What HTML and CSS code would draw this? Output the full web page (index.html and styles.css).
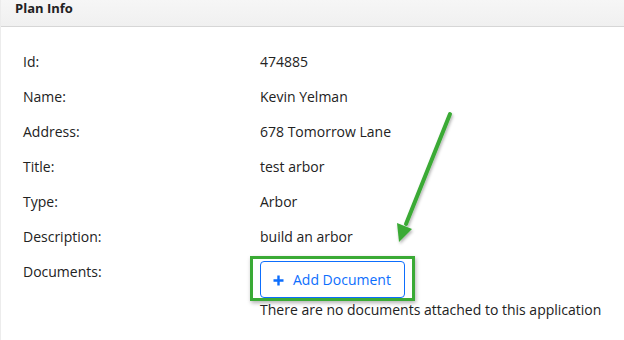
FILE: index.html
```html
<!doctype html>
<html lang="en-us">
  <head>
    <meta charset="utf-8">
    <title>Plan Info</title>
    <link rel="stylesheet" href="styles.css">
  </head>
  <body>
    <div class="card">
      <div class="card-header">Plan Info</div>
      <div class="card-body">
        <div class="row"><div class="label">Id:</div><div class="value">474885</div></div>
        <div class="row"><div class="label">Name:</div><div class="value">Kevin Yelman</div></div>
        <div class="row"><div class="label">Address:</div><div class="value">678 Tomorrow Lane</div></div>
        <div class="row"><div class="label">Title:</div><div class="value">test arbor</div></div>
        <div class="row"><div class="label">Type:</div><div class="value">Arbor</div></div>
        <div class="row"><div class="label">Description:</div><div class="value">build an arbor</div></div>
        <div class="row docs">
          <div class="label">Documents:</div>
          <div class="value">
            <div class="btn-wrap">
              <button class="btn-add" type="button">
                <svg class="plus" width="11" height="11" viewBox="0 0 11 11"><path d="M5.5 0.5v10M0.5 5.5h10" stroke="currentColor" stroke-width="2.4" fill="none"/></svg>
                Add Document
              </button>
              <div class="highlight"></div>
            </div>
            <div class="empty">There are no documents attached to this application</div>
          </div>
        </div>
      </div>
      <svg class="arrow" width="70" height="150" viewBox="0 0 70 150">
        <defs>
          <filter id="sh" x="-50%" y="-50%" width="200%" height="200%">
            <feDropShadow dx="1" dy="2" stdDeviation="1.5" flood-color="#000" flood-opacity="0.3"/>
          </filter>
        </defs>
        <g filter="url(#sh)">
          <path d="M59 6 L15 116" stroke="#3aaa35" stroke-width="4" stroke-linecap="round" fill="none"/>
          <path d="M6 115 L8 134 L21 121 Z" fill="#3aaa35"/>
        </g>
      </svg>
    </div>
  </body>
</html>
```

FILE: styles.css
```css
body {
  margin: 0;
  font-family: "Open Sans", "Noto Sans", sans-serif;
  font-size: 14px;
  color: #222;
  background: #fff;
}

.card {
  position: relative;
  height: 340px;
  border-left: 1px solid #ececec;
}

.card-header {
  height: 25px;
  padding-top: 1px;
  line-height: 15px;
  padding-left: 14px;
  font-weight: bold;
  font-size: 13px;
  color: #222;
  background: linear-gradient(#f6f6f6, #f0f0f0);
  border-bottom: 1px solid #d6d6d6;
}

.card-body {
  padding: 25px 0 0 22px;
}

.row {
  display: grid;
  grid-template-columns: 237px 1fr;
  height: 35px;
  line-height: 20px;
}

.row.docs {
  height: auto;
}

.btn-wrap {
  position: relative;
  margin-top: -1px;
  width: 145px;
}

.btn-add {
  display: flex;
  align-items: center;
  gap: 9px;
  width: 145px;
  height: 37px;
  padding: 0 0 0 12px;
  border: 1px solid #0d6efd;
  border-radius: 4px;
  background: #fff;
  color: #0d6efd;
  font-family: inherit;
  font-size: 14px;
}

.plus {
  margin-top: 1px;
}

.highlight {
  position: absolute;
  left: -10px;
  top: -5px;
  width: 159px;
  height: 39px;
  border: 3px solid #3aaa35;
  box-shadow: 1px 2px 4px rgba(0, 0, 0, 0.3);
}

.empty {
  margin-top: 2px;
}

.arrow {
  position: absolute;
  left: 390px;
  top: 108px;
}
```
